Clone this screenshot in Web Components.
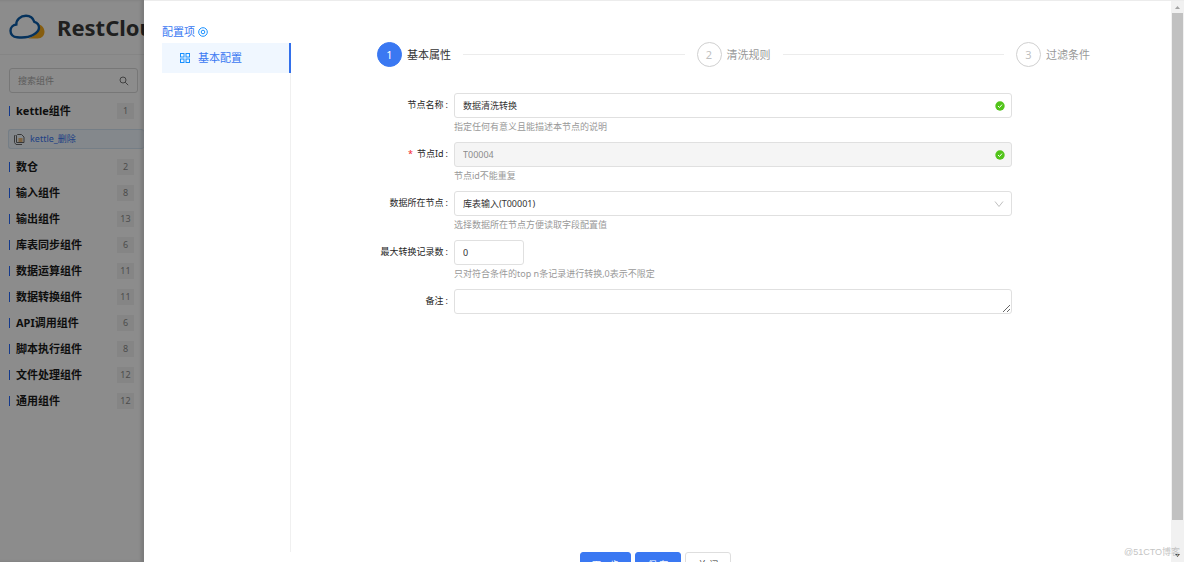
<!DOCTYPE html>
<html lang="zh">
<head>
<meta charset="utf-8">
<title>RestCloud</title>
<style>
html, body { height: 100%; margin: 0; overflow: hidden; }
body { font: 9px/14px "Noto Sans", "Noto Sans CJK SC", sans-serif; color: #333; background: #fff; }
</style>
</head>
<body>
<rc-app></rc-app>
<script>
const define = (name, html, setup) => {
  const tpl = document.createElement('template');
  tpl.innerHTML = '<style>*{box-sizing:border-box}</style>' + html;
  customElements.define(name, class extends HTMLElement {
    connectedCallback() {
      if (this.shadowRoot) return;
      const root = this.attachShadow({ mode: 'open' });
      root.append(tpl.content.cloneNode(true));
      if (setup) setup(this, root);
    }
  });
};

define('rc-logo', `
<style>
:host { display: flex; align-items: center; gap: 12px; height: 55px; padding-left: 9px; overflow: hidden;
  font: bold 22px/28px "Noto Sans", sans-serif; color: #393939; border-bottom: 1px solid #f3f3f3; background: #fff; }
svg { flex: none; }
span { flex: 1; min-width: 0; overflow: hidden; }
</style>
<svg width="36" height="26" viewBox="0 0 36 26" aria-hidden="true">
  <path d="M19 24.5H28.5C33 24.5 35.5 21.500 35.500 17.800C35.500 14 33 11.200 29.500 10.200C29.500 17 27 22 19 24.500Z" fill="#f5a91c"/>
  <path d="M8 23.200C3.800 23.200 1.500 20 1.500 16.800C1.500 13 4.500 10.800 7.300 10.500C7.200 5.500 11.500 1.800 17 1.800C21.200 1.800 24.200 4.500 25.300 7.800C28 8.500 30 10.800 30 13.800C30 18 26 19.800 23.500 21.300C20 23.300 17 24 8 23.200Z" fill="#fff" stroke="#0a5ba8" stroke-width="2.400"/>
</svg><span>RestCloud</span>`);

define('rc-group', `
<style>
:host { display: flex; align-items: center; height: 16px; padding-right: 10px; }
i { width: 1px; height: 10px; margin-left: 1px; background: #2468ff; }
b { flex: 1; padding-left: 6px; font-size: 11px; line-height: 16px; color: #1a1a1a; white-space: nowrap; }
span { width: 17px; height: 16px; line-height: 16px; text-align: center; background: #f3f3f3; color: #8c8c8c; }
</style><i></i><b><slot></slot></b><span></span>`,
(el, root) => { root.querySelector('span').textContent = el.getAttribute('count'); });

define('rc-sidebar', `
<style>
:host { display: flex; flex-direction: column; background: #fff; overflow: hidden; }
nav { display: flex; flex-direction: column; gap: 10px; padding: 13px 0 0 8px; }
label { display: flex; align-items: center; height: 25px; margin: 0 6px 0 1px; padding: 0 8px; border: 1px solid #d9d9d9; border-radius: 3px; }
input { flex: 1; min-width: 0; border: 0; padding: 0; outline: 0; font: inherit; background: none; }
input::placeholder { color: #a8a8a8; }
a { display: flex; align-items: center; gap: 5px; height: 20px; padding-left: 4px; border: 1px solid #d5e5f5; border-right: 0; border-radius: 3px; background: #f0f7ff; color: #3a78f2; text-decoration: none; }
</style>
<rc-logo></rc-logo>
<nav>
  <label><input type="search" aria-label="搜索组件" placeholder="搜索组件">
    <svg width="10" height="10" viewBox="0 0 10 10" fill="none" stroke="#777"><circle cx="4" cy="4" r="3"/><path d="M6.200 6.200L9.200 9.200"/></svg></label>
  <rc-group count="1">kettle组件</rc-group>
  <a href="#kettle"><svg width="12" height="12" viewBox="0 0 12 12" fill="none" stroke="#666"><path d="M4.500 1.500H8.500L11 4V9.500H3.500V2.500Z"/><path d="M2.500 2.500H1.500V9.500L3 11.500H9"/><rect x="5.500" y="5" width="4" height="4" fill="#e8b878" stroke="none"/></svg>kettle_删除</a>
  <rc-group count="2">数仓</rc-group>
  <rc-group count="8">输入组件</rc-group>
  <rc-group count="13">输出组件</rc-group>
  <rc-group count="6">库表同步组件</rc-group>
  <rc-group count="11">数据运算组件</rc-group>
  <rc-group count="11">数据转换组件</rc-group>
  <rc-group count="6">API调用组件</rc-group>
  <rc-group count="8">脚本执行组件</rc-group>
  <rc-group count="12">文件处理组件</rc-group>
  <rc-group count="12">通用组件</rc-group>
</nav>`);

define('rc-config-menu', `
<style>
:host { display: flex; flex-direction: column; width: 129px; flex: none; font-size: 11px; line-height: 16px; color: #3a78f2; }
header { display: flex; align-items: center; gap: 3px; height: 16px; margin-bottom: 3px; }
nav { flex: 1; border-right: 1px solid #f0f0f0; }
a { display: flex; align-items: center; gap: 8px; height: 30px; margin-right: -1px; padding-left: 18px; background: #f0f7ff; border-right: 2px solid #3370eb; color: inherit; text-decoration: none; }
</style>
<header>配置项<svg width="10" height="10" viewBox="0 0 10 10" fill="none" stroke="#1890ff"><circle cx="5" cy="5" r="4.300"/><circle cx="5" cy="5" r="1.800"/></svg></header>
<nav><a href="#basic" aria-current="page"><svg width="10" height="10" viewBox="0 0 10 10" fill="none" stroke="#1890ff"><rect x=".5" y=".5" width="3.500" height="3.500"/><rect x="6" y=".5" width="3.500" height="3.500"/><rect x=".5" y="6" width="3.500" height="3.500"/><rect x="6" y="6" width="3.500" height="3.500"/></svg>基本配置</a></nav>`);

define('rc-step', `
<style>
:host { display: flex; align-items: center; flex: 1; font-size: 11px; line-height: 16px; color: #999; white-space: nowrap; }
:host([last]) { flex: none; }
span { width: 25px; height: 25px; margin-right: 5px; border: 1px solid #d0d0d0; border-radius: 50%; line-height: 23px; text-align: center; color: #bfbfbf; }
:host([active]) { color: #333; }
:host([active]) span { background: #3a78f2; border-color: #3a78f2; color: #fff; }
i { flex: 1; height: 1px; margin: 0 12px; background: #ececec; }
:host([last]) i { display: none; }
</style><span></span><slot></slot><i></i>`,
(el, root) => { root.querySelector('span').textContent = el.getAttribute('n'); });

define('rc-field', `
<style>
:host { display: grid; grid-template-columns: 72px 1fr; column-gap: 5px; min-height: 49px; align-content: start; }
label { text-align: right; line-height: 24px; white-space: nowrap; color: #262626; }
label::after { content: ":"; margin: 0 1px 0 2px; }
:host([required]) label::before { content: "*"; color: #f5222d; margin-right: 4px; }
.box { position: relative; display: flex; }
input, select, textarea { width: 100%; height: 25px; margin: 0; padding: 0 8px; border: 1px solid #e0e0e0; border-radius: 3px; font: inherit; color: #333; background: #fff; outline: 0; appearance: none; }
textarea { min-height: 25px; resize: vertical; }
input:disabled { background: #f5f5f5; color: #8c8c8c; }
:host([small]) input { width: 70px; }
svg { position: absolute; right: 7px; top: 8px; pointer-events: none; }
p { grid-column: 2; margin: 2px 0 0; color: #999; }
</style>
<label for="c"></label><div class="box"></div><p></p>`,
(el, root) => {
  const at = n => el.getAttribute(n) || '';
  root.querySelector('label').textContent = at('label');
  root.querySelector('p').textContent = at('hint');
  const type = at('type') || 'input';
  const c = document.createElement(type);
  c.id = 'c';
  if (type === 'select') c.add(new Option(at('value'))); else c.value = at('value');
  if (el.hasAttribute('locked')) c.disabled = true;
  const box = root.querySelector('.box');
  box.append(c);
  if (el.hasAttribute('valid')) box.insertAdjacentHTML('beforeend', '<svg width="10" height="10" viewBox="0 0 10 10"><circle cx="5" cy="5" r="4.700" fill="#52c41a"/><path d="M3 5L4.500 6.500L7 3.600" fill="none" stroke="#fff"/></svg>');
  if (type === 'select') box.insertAdjacentHTML('beforeend', '<svg width="12" height="10" viewBox="0 0 12 10"><path d="M2 2.500L6 7.500L10 2.500" fill="none" stroke="#bfbfbf"/></svg>');
});

define('rc-button', `
<style>
:host { display: block; }
button { min-width: 46px; height: 25px; padding: 0 11px; border: 1px solid #dedede; border-radius: 3px; font: inherit; background: #fff; color: #333; white-space: pre; }
:host([primary]) button { background: #3a78f2; border-color: #3a78f2; color: #fff; }
</style><button type="button"><slot></slot></button>`);

define('rc-scrollbar', `
<style>
:host { display: flex; flex-direction: column; align-items: center; width: 13px; flex: none; background: #f1f1f1; }
svg { flex: none; }
div { width: 11px; flex: 1; background: #c1c1c1; }
i { height: 28px; }
</style>
<svg width="13" height="12" viewBox="0 0 13 12"><path d="M4 8L6.500 5L9 8Z" fill="#a3a3a3"/></svg><div></div><i></i>
<svg width="13" height="14" viewBox="0 0 13 14"><path d="M4 6L6.500 9L9 6Z" fill="#404040"/></svg>`);

define('rc-app', `
<style>
:host { display: grid; grid-template-columns: 144px minmax(0, 1fr); height: 100vh; position: relative; overflow: hidden; }
.left { position: relative; display: grid; grid-template-columns: minmax(0, 1fr); overflow: hidden; }
.left::after { content: ""; position: absolute; inset: 0; background: rgba(0,0,0,.45); box-shadow: inset -3px 0 3px rgba(0,0,0,.12); }
.drawer { display: flex; min-width: 0; border-top: 1px solid #ececec; background: #fff; }
.content { flex: 1; min-width: 0; display: flex; flex-direction: column; }
.body { flex: 1; display: flex; padding: 23px 81px 0 18px; min-height: 0; }
main { flex: 1; min-width: 0; padding: 18px 0 0 86px; }
.steps { display: flex; margin-bottom: 26px; }
form { width: 89%; }
footer { display: flex; flex: none; justify-content: center; gap: 4px; height: 10px; margin-right: 4px; overflow: hidden; }
.mark { position: absolute; right: 4px; bottom: 3px; font-family: "Liberation Sans", "Noto Sans CJK SC", sans-serif; color: #c4c4c4; }
</style>
<div class="left"><rc-sidebar></rc-sidebar></div>
<div class="drawer">
  <div class="content">
    <div class="body">
      <rc-config-menu></rc-config-menu>
      <main>
        <div class="steps"><rc-step n="1" active>基本属性</rc-step><rc-step n="2">清洗规则</rc-step><rc-step n="3" last>过滤条件</rc-step></div>
        <form>
          <rc-field label="节点名称" value="数据清洗转换" hint="指定任何有意义且能描述本节点的说明" valid></rc-field>
          <rc-field label="节点Id" value="T00004" hint="节点id不能重复" required locked valid></rc-field>
          <rc-field label="数据所在节点" type="select" value="库表输入(T00001)" hint="选择数据所在节点方便读取字段配置值"></rc-field>
          <rc-field label="最大转换记录数" value="0" hint="只对符合条件的top n条记录进行转换,0表示不限定" small></rc-field>
          <rc-field label="备注" type="textarea"></rc-field>
        </form>
      </main>
    </div>
    <footer><rc-button primary>下一步</rc-button><rc-button primary>保 存</rc-button><rc-button>关 闭</rc-button></footer>
  </div>
  <rc-scrollbar></rc-scrollbar>
</div>
<span class="mark">@51CTO博客</span>`);
</script>
</body>
</html>
